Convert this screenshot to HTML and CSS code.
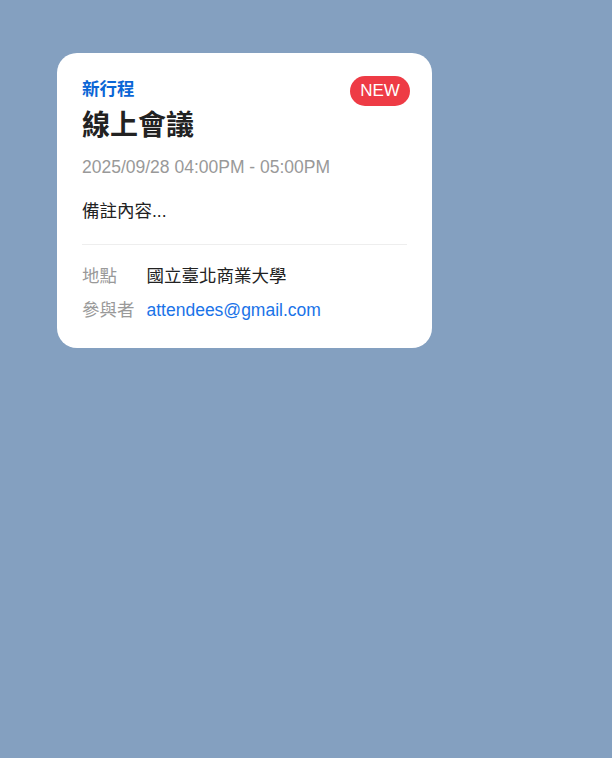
FILE: index.html
```html
<!DOCTYPE html>
<html lang="zh-Hant">
<head>
<meta charset="utf-8">
<title>新行程</title>
<link rel="stylesheet" href="styles.css">
</head>
<body>
<div class="card">
  <span class="badge">NEW</span>
  <div class="tag">新行程</div>
  <h1 class="title">線上會議</h1>
  <div class="time">2025/09/28 04:00PM - 05:00PM</div>
  <p class="note">備註內容...</p>
  <hr class="divider">
  <dl class="details">
    <dt class="label">地點</dt>
    <dd class="value">國立臺北商業大學</dd>
    <dt class="label">參與者</dt>
    <dd class="value"><a class="email" href="#">attendees@gmail.com</a></dd>
  </dl>
</div>
</body>
</html>
```

FILE: styles.css
```css
html, body {
  margin: 0;
  padding: 0;
}
body {
  background: #84a0c0;
  font-family: "Liberation Sans", Arial, "Noto Sans CJK TC", sans-serif;
  font-size: 17.5px;
  color: #222;
  padding: 53px 0 0 57px;
  min-height: 758px;
  box-sizing: border-box;
}
.card {
  position: relative;
  width: 375px;
  box-sizing: border-box;
  background: #fff;
  border-radius: 20px;
  padding: 24px 25px 26px 25px;
}
.badge {
  position: absolute;
  top: 23px;
  right: 22px;
  width: 60px;
  height: 30px;
  border-radius: 15px;
  background: #ee3b45;
  color: #fff;
  font-size: 17px;
  line-height: 30px;
  text-align: center;
}
.tag {
  color: #0b66d6;
  font-weight: bold;
  font-size: 17.5px;
  line-height: 24px;
}
.title {
  margin: 7px 0 0;
  font-size: 28px;
  font-weight: bold;
  line-height: 36px;
  color: #222;
}
.time {
  margin-top: 11px;
  color: #999;
  line-height: 24px;
}
.note {
  margin: 20px 0 0;
  line-height: 24px;
}
.divider {
  border: 0;
  border-top: 1px solid #eee;
  margin: 21px 0 0;
}
.details {
  margin: 19px 0 0;
  display: grid;
  grid-template-columns: auto 1fr;
  column-gap: 12px;
  row-gap: 10px;
  line-height: 24px;
}
.label {
  color: #999;
  margin: 0;
}
.value {
  margin: 0;
  color: #222;
}
.email {
  color: #1a73e8;
  text-decoration: none;
}
```
